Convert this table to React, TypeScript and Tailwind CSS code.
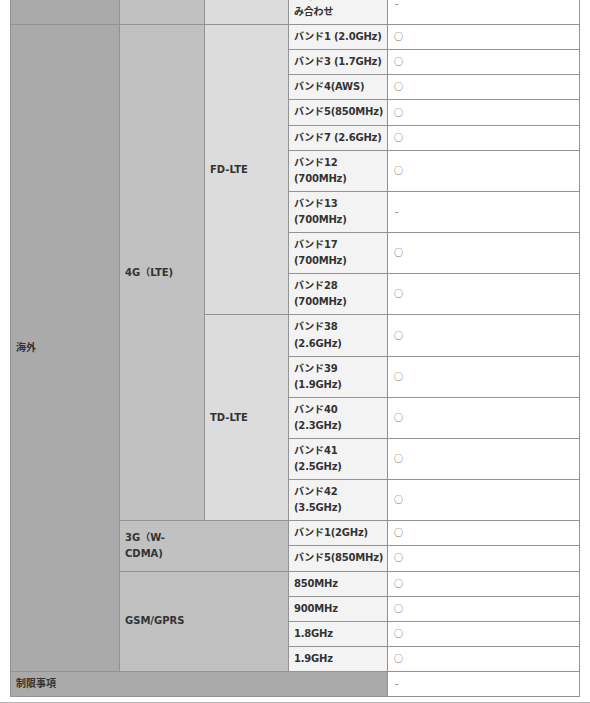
import React from "react";

const F = { fontFamily: '"DejaVu Sans", "Noto Sans CJK JP", sans-serif' };

type Band = { label: React.ReactNode; value: string };

const cell = "flex items-center px-[5px] py-[4px] leading-[16.1px]";
const c1 = `${cell} bg-[#aaaaaa]`;
const c2 = `${cell} bg-[#c1c1c1]`;
const c3 = `${cell} bg-[#dcdcdc]`;
const c4 = `${cell} bg-[#f3f3f3] whitespace-nowrap tracking-[-0.2px]`;
const c5 = `${cell} bg-white font-normal text-[#555]`;

function Value({ v }: { v: string }) {
  return v === "○" ? (
    <span className="text-[9px] leading-[16px] pl-[1px]" style={{ fontFamily: '"Noto Sans CJK JP", sans-serif' }}>
      ○
    </span>
  ) : (
    <span className="text-[9px] pl-[2px]">-</span>
  );
}

function Row({ b }: { b: Band }) {
  return (
    <>
      <div className={c4}>
        <span>{b.label}</span>
      </div>
      <div className={c5}>
        <Value v={b.value} />
      </div>
    </>
  );
}

const two = (a: string, b: string) => (
  <>
    {a}
    <br />
    {b}
  </>
);

const fd: Band[] = [
  { label: "バンド1 (2.0GHz)", value: "○" },
  { label: "バンド3 (1.7GHz)", value: "○" },
  { label: "バンド4(AWS)", value: "○" },
  { label: "バンド5(850MHz)", value: "○" },
  { label: "バンド7 (2.6GHz)", value: "○" },
  { label: two("バンド12", "(700MHz)"), value: "○" },
  { label: two("バンド13", "(700MHz)"), value: "-" },
  { label: two("バンド17", "(700MHz)"), value: "○" },
  { label: two("バンド28", "(700MHz)"), value: "○" },
];

const td: Band[] = [
  { label: two("バンド38", "(2.6GHz)"), value: "○" },
  { label: two("バンド39", "(1.9GHz)"), value: "○" },
  { label: two("バンド40", "(2.3GHz)"), value: "○" },
  { label: two("バンド41", "(2.5GHz)"), value: "○" },
  { label: two("バンド42", "(3.5GHz)"), value: "○" },
];

const g3: Band[] = [
  { label: "バンド1(2GHz)", value: "○" },
  { label: "バンド5(850MHz)", value: "○" },
];

const gsm: Band[] = [
  { label: "850MHz", value: "○" },
  { label: "900MHz", value: "○" },
  { label: "1.8GHz", value: "○" },
  { label: "1.9GHz", value: "○" },
];

export default function App() {
  return (
    <div className="w-[590px] h-[703px] overflow-hidden bg-white" style={F}>
      <div
        className="ml-[10px] -mt-[17px] w-[570px] grid grid-cols-[108px_84px_83px_98px_191px] gap-px bg-[#939393] p-px text-[10px] font-bold text-[#333]"
      >
        {/* partial top row */}
        <div className={c1}></div>
        <div className={c2}></div>
        <div className={c3}></div>
        <div className={c4}>
          <span>{two("CA組", "み合わせ")}</span>
        </div>
        <div className={c5}>
          <Value v="-" />
        </div>

        {/* 海外 */}
        <div className={`${c1} row-span-20`}>海外</div>
        <div className={`${c2} row-span-14`}>4G（LTE)</div>
        <div className={`${c3} row-span-9`}>FD-LTE</div>
        {fd.map((b, i) => (
          <Row key={"fd" + i} b={b} />
        ))}
        <div className={`${c3} row-span-5`}>TD-LTE</div>
        {td.map((b, i) => (
          <Row key={"td" + i} b={b} />
        ))}
        <div className={`${c2} col-span-2 row-span-2`}>{two("3G（W-", "CDMA)")}</div>
        {g3.map((b, i) => (
          <Row key={"g3" + i} b={b} />
        ))}
        <div className={`${c2} col-span-2 row-span-4`}>GSM/GPRS</div>
        {gsm.map((b, i) => (
          <Row key={"gsm" + i} b={b} />
        ))}

        <div className={`${c1} col-span-4`}>制限事項</div>
        <div className={c5}>
          <Value v="-" />
        </div>
      </div>
      <div className="mt-[5px] border-t border-[#b5b5b5]"></div>
    </div>
  );
}
